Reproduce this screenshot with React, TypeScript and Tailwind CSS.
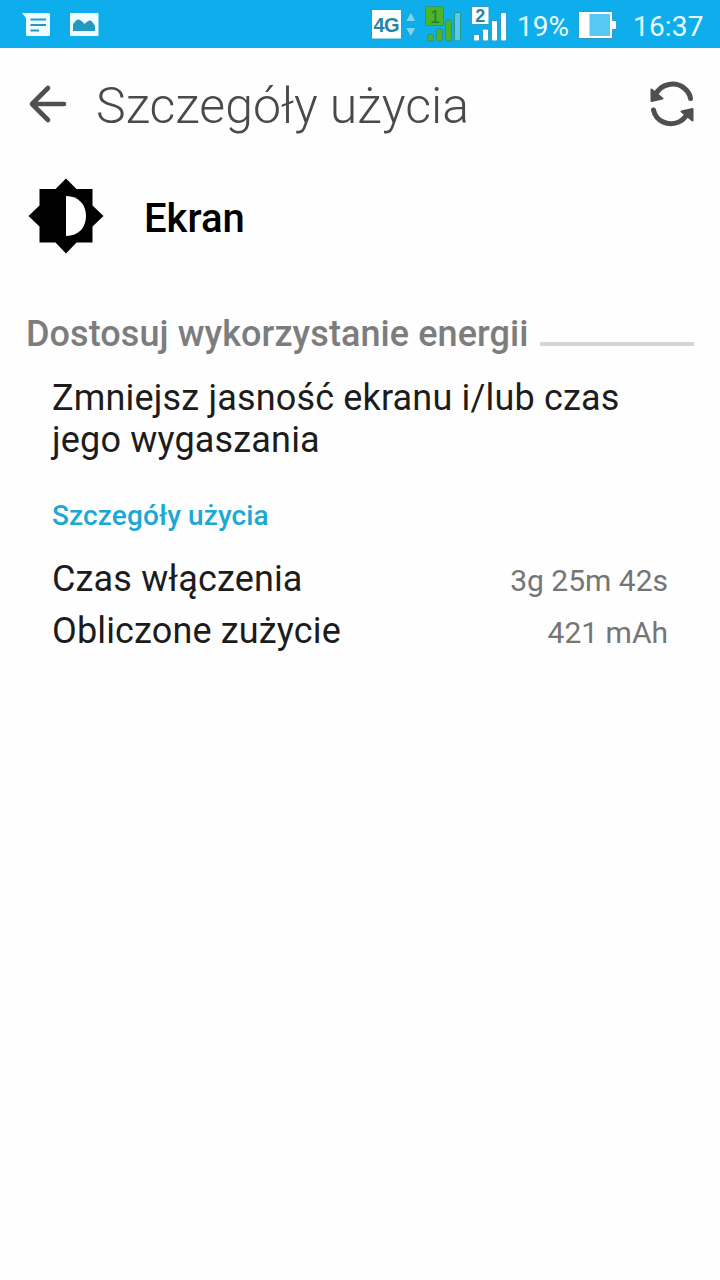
import React from "react";

const StatusBar = () => {
  return (
    <header className="flex h-12 items-center justify-between bg-[#0eaeec] text-[#e9fbff]">
      <svg className="h-12 w-[120px]" viewBox="0 0 120 48">
        <path
          fill="#eefcff"
          d="M22 13H48.500Q50 13 50 14.500V34.500Q50 36 48.500 36H27.500Q26 36 26 34.500V18Z"
        />
        <path stroke="#2499c0" strokeWidth="2.200" d="M30.500 19.500H46M30.500 25H46M30.500 30.500H39" />
        <rect x="70" y="13" width="28.500" height="23" rx="1" fill="#eefcff" />
        <path
          fill="#2499c0"
          d="M73 31V24.500Q76 19.500 78.500 19.500Q80.500 19.500 84.500 24Q88 20.500 90 20.500Q92 20.500 95 26V31Z"
        />
      </svg>
      <div className="flex items-center">
        <svg className="h-12 w-[150px]" viewBox="360 0 150 48">
          <rect x="371.500" y="9.500" width="30" height="29.500" fill="#fff" stroke="#2b9fc5" />
          <text
            x="386.500"
            y="32"
            textAnchor="middle"
            textLength="26"
            className="fill-[#2786a3] font-['Liberation_Sans',sans-serif] text-[20px] font-bold"
          >
            4G
          </text>
          <path fill="#7ad7f8" stroke="#2b9fc5" d="M410.800 12L416 21.500H405.600ZM410.800 37L416 27.500H405.600Z" />
          <rect x="425.500" y="6.500" width="18" height="19" rx="1" fill="#4cb526" stroke="#25977c" />
          <text
            x="435"
            y="22.500"
            textAnchor="middle"
            className="fill-[#237b36] font-['Liberation_Sans',sans-serif] text-[18px]"
          >
            1
          </text>
          <g fill="#4cb526" stroke="#25977c">
            <rect x="427.500" y="34.500" width="6" height="6.500" rx="1.500" />
            <rect x="436.500" y="29" width="6" height="12" rx="1.500" />
            <rect x="445.500" y="20" width="6" height="21" rx="1.500" />
            <rect x="454.500" y="12.500" width="6" height="28.500" rx="1.500" fill="#58c9f5" />
          </g>
          <rect x="471.500" y="6.500" width="17.500" height="18" rx="1" fill="#fff" stroke="#2b9fc5" />
          <text
            x="480.200"
            y="22"
            textAnchor="middle"
            className="fill-[#2786a3] font-['Liberation_Sans',sans-serif] text-[18px] font-bold"
          >
            2
          </text>
          <g fill="#fff" stroke="#2b9fc5">
            <rect x="473.500" y="34.500" width="6" height="6.500" rx="1.500" />
            <rect x="482.500" y="29" width="6" height="12" rx="1.500" />
            <rect x="491.500" y="20.500" width="6" height="20.500" rx="1.500" />
            <rect x="500.500" y="12.500" width="6" height="28.500" rx="1.500" />
          </g>
        </svg>
        <span className="w-[68px] pt-[6px] pl-[7px] text-[28px] leading-none">19%</span>
        <svg className="h-12 w-[40px]" viewBox="578 0 40 48">
          <path fill="#fff" stroke="#2b9fc5" d="M578.500 11.500H612.500V20.500H616.500V29.500H612.500V38.500H578.500Z" />
          <rect x="589.500" y="14" width="20.500" height="22" fill="#56c8f2" />
        </svg>
        <span className="w-[102px] pt-[6px] pl-[15px] text-[28px] leading-none tracking-[0.2px]">16:37</span>
      </div>
    </header>
  );
};

const TitleBar = () => {
  return (
    <div className="flex h-[112px] items-center justify-between">
      <div className="flex items-center">
        <svg
          className="h-[50px] w-[96px]"
          viewBox="0 79 96 50"
          fill="none"
          stroke="#4f4f4f"
          strokeWidth="4.600"
          strokeLinecap="round"
          strokeLinejoin="round"
        >
          <path d="M48 88L32 104L48 120M32 104H64" />
        </svg>
        <h1 className="pt-[3px] text-[50px] leading-none font-light text-[#4a4a4a]">Szczegóły użycia</h1>
      </div>
      <svg className="h-[50px] w-[80px]" viewBox="640 79 80 50">
        <g fill="none" stroke="#4f4f4f" strokeWidth="5" strokeLinecap="round">
          <path d="M655 95.500C661 82.500 676 81.500 684 88C687.800 91 690 94.500 690.500 98.500" />
          <path d="M653.500 110C656 121.500 668 126 677.500 122.500C682 121 685 118 687.500 113.500" />
        </g>
        <path
          fill="#4f4f4f"
          stroke="#4f4f4f"
          strokeWidth="2"
          strokeLinejoin="round"
          d="M651.500 89.500V101L662.500 98.500ZM692.500 109V120.500L681.500 111.500Z"
        />
      </svg>
    </div>
  );
};

const usage = [
  { label: "Czas włączenia", value: "3g 25m 42s" },
  { label: "Obliczone zużycie", value: "421 mAh" },
];

const App = () => {
  return (
    <div className="min-h-screen bg-[#fefefe] font-[Roboto,sans-serif]">
      <StatusBar />
      <TitleBar />
      <main>
        <div className="flex h-[112px] items-center gap-[40px] pl-[28px]">
          <svg className="h-[76px] w-[76px]" viewBox="28 178 76 76">
            <path
              fill="#000"
              d="M66 178.500L76.500 189H92.500V205.500L103.500 216L92.500 226.500V242.500H76.500L66 253.500L55.500 242.500H39.500V226.500L28.500 216L39.500 205.500V189H55.500Z"
            />
            <path fill="#fff" d="M66 196C79 196 86 205 86 216S79 236 66 236Z" />
          </svg>
          <h2 className="pt-[6px] text-[40px] leading-none font-medium text-black">Ekran</h2>
        </div>
        <div className="mt-[37px] flex h-[50px] items-center gap-[11px] px-[26px]">
          <h3 className="text-[36px] leading-none font-medium tracking-[0.08px] text-[#7d7d7d]">
            Dostosuj wykorzystanie energii
          </h3>
          <div className="mt-[20px] h-1 grow bg-[#d5d5d5]" />
        </div>
        <section className="px-[52px] text-[#1c1c1c]">
          <p className="mt-[18px] text-[36px] leading-[42px] tracking-[0.17px]">
            Zmniejsz jasność ekranu i/lub czas
            <br />
            jego wygaszania
          </p>
          <h4 className="mt-[37px] text-[28px] leading-[36px] font-medium tracking-[0.12px] text-[#1ba8d5]">
            Szczegóły użycia
          </h4>
          <div className="mt-[19px]">
            {usage.map((row) => (
              <div key={row.label} className="flex h-[52px] items-center justify-between">
                <span className="text-[36px] leading-none tracking-[0.15px]">{row.label}</span>
                <span className="pt-1 text-[30px] leading-none text-[#757575]">{row.value}</span>
              </div>
            ))}
          </div>
        </section>
      </main>
    </div>
  );
};

export default App;
